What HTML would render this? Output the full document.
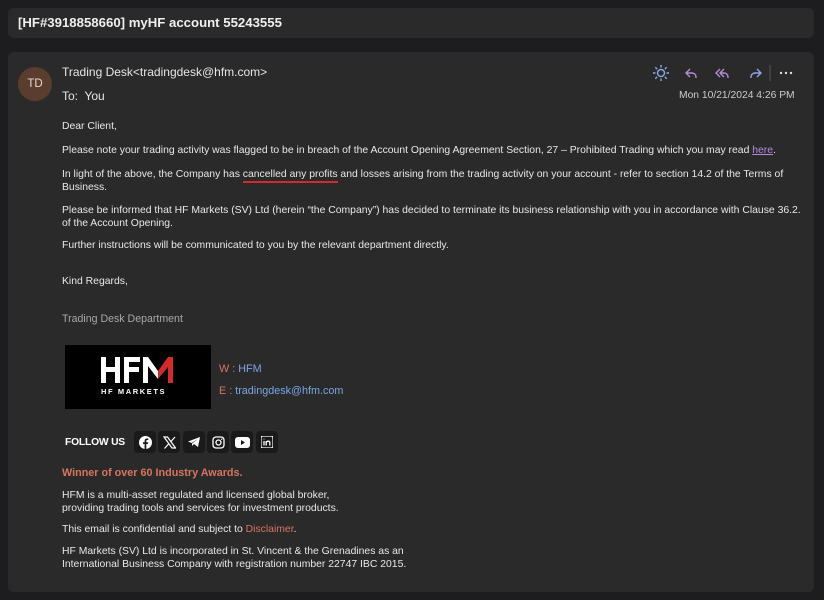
<!DOCTYPE html>
<html><head><meta charset="utf-8"><style>
*{margin:0;padding:0;box-sizing:border-box}
body{width:824px;height:600px;background:#1d1d20;font-family:"Liberation Sans",Arial,sans-serif;color:#e6e6e6;position:relative;overflow:hidden}
.subj{position:absolute;left:8px;top:8px;width:806px;height:30px;background:#2a2a2a;border-radius:6px;font-size:13.2px;font-weight:bold;color:#f0f0f0;padding:7px 10px}
.card{position:absolute;left:8px;top:52px;width:806px;height:540px;background:#2a2a2a;border-radius:6px}
.a{position:absolute;white-space:nowrap}
.t{font-size:10.4px;color:#e8e8e8;line-height:12.5px}
.av{left:18px;top:67px;width:34px;height:34px;border-radius:50%;background:#5a3d2e;color:#e8d6cc;font-size:11.5px;text-align:center;line-height:34px}
.s{font-size:12px;color:#e6e6e6}
.ic{width:22px;height:22px;background:#1a1a1a;border-radius:4px;display:flex;align-items:center;justify-content:center;position:absolute;top:431px}
.u{border-bottom:2px solid #d42a2a;padding-bottom:1px}
</style></head><body>
<div class="subj">[HF#3918858660] myHF account 55243555</div>
<div class="card"></div>
<div class="a av">TD</div>
<div class="a s" style="left:62px;top:65px">Trading Desk&lt;tradingdesk@hfm.com&gt;</div>
<div class="a s" style="left:62px;top:89px">To:&nbsp; You</div>
<svg class="a" style="left:650px;top:62px" width="150" height="22" viewBox="0 0 150 22">
<g stroke="#8aa7e8" stroke-width="1.4" fill="none"><circle cx="11" cy="11" r="3.5"/><path d="M11 3v2.5M11 16.5V19M3 11h2.5M16.5 11H19M5.3 5.3l1.8 1.8M14.9 14.9l1.8 1.8M5.3 16.7l1.8-1.8M14.9 7.1l1.8-1.8"/></g>
<path d="M40 7l-4 4 4 4M36 11h6a4 4 0 0 1 4 4v1" stroke="#b78ad8" stroke-width="1.4" fill="none"/>
<path d="M70 7l-4 4 4 4M74 7l-4 4 4 4M70 11h4a4 4 0 0 1 4 4v1" stroke="#b78ad8" stroke-width="1.4" fill="none"/>
<path d="M107 7l4 4-4 4M111 11h-6a4 4 0 0 0-4 4v1" stroke="#8aa7e8" stroke-width="1.4" fill="none"/>
<path d="M120 3v16" stroke="#555" stroke-width="1"/>
<circle cx="131" cy="11" r="1.2" fill="#ddd"/><circle cx="136" cy="11" r="1.2" fill="#ddd"/><circle cx="141" cy="11" r="1.2" fill="#ddd"/>
</svg>
<div class="a" style="left:679px;top:90px;font-size:10.3px;color:#ccc">Mon 10/21/2024 4:26 PM</div>
<div class="a t" style="left:62px;top:121px">Dear Client,</div>
<div class="a t" style="left:62px;top:145px">Please note your trading activity was flagged to be in breach of the Account Opening Agreement Section, 27 – Prohibited Trading which you may read <span style="color:#b58ae0;text-decoration:underline">here</span>.</div>
<div class="a t" style="left:62px;top:169px">In light of the above, the Company has <span class="u">cancelled any profits</span> and losses arising from the trading activity on your account - refer to section 14.2 of the Terms of<br>Business.</div>
<div class="a t" style="left:62px;top:205px">Please be informed that HF Markets (SV) Ltd (herein “the Company”) has decided to terminate its business relationship with you in accordance with Clause 36.2.<br>of the Account Opening.</div>
<div class="a t" style="left:62px;top:240px">Further instructions will be communicated to you by the relevant department directly.</div>
<div class="a t" style="left:62px;top:276px">Kind Regards,</div>
<div class="a" style="left:62px;top:313px;font-size:10.6px;color:#a8a8a8">Trading Desk Department</div>
<div class="a" style="left:65px;top:345px;width:146px;height:64px;background:#000"></div>
<svg class="a" style="left:98px;top:355px" width="82" height="30" viewBox="0 0 82 30">
<path d="M3 2h5v10h9V2h5v26h-5V17H8v11H3z" fill="#fff"/>
<path d="M26 2h16v5H31v5h10v5H31v11h-5z" fill="#fff"/>
<path d="M45 28V2h5l10 14v8L50 11v17z" fill="#fff"/>
<path d="M60 16l10-14h5v26h-5V12l-10 12z" fill="#d42a2a"/>
</svg>
<div class="a" style="left:101px;top:387px;font-size:7.5px;font-weight:bold;color:#fff;letter-spacing:1.6px">HF MARKETS</div>
<div class="a" style="left:219px;top:363px;font-size:10.8px;color:#d9745f">W : <span style="color:#7aa6e6">HFM</span></div>
<div class="a" style="left:219px;top:385px;font-size:10.8px;color:#d9745f">E : <span style="color:#7aa6e6">tradingdesk@hfm.com</span></div>
<div class="a" style="left:65px;top:437px;font-size:10.3px;font-weight:bold;color:#fff;letter-spacing:-.2px">FOLLOW US</div>
<div class="ic" style="left:134px"><svg width="13" height="13"><circle cx="6.5" cy="6.5" r="6.5" fill="#fff"/><path d="M7.3 13V8h1.6l.3-1.8H7.3V5c0-.6.3-1 1-1h1V2.5H8C6.4 2.5 5.6 3.4 5.6 5v1.2H4V8h1.6v5z" fill="#1a1a1a"/></svg></div>
<div class="ic" style="left:158px"><svg width="13" height="13"><path d="M1 1h3.5l8 11H9z" fill="none" stroke="#fff" stroke-width="1.2"/><path d="M12 1L7.5 6M1.5 12.5L6 7.5" stroke="#fff" stroke-width="1.2"/></svg></div>
<div class="ic" style="left:183px"><svg width="14" height="12"><path d="M1 5.5L13 1l-2 10-4-3-2 2V7.5L11 3 4.5 7z" fill="#fff"/></svg></div>
<div class="ic" style="left:207px"><svg width="13" height="13"><rect x="1" y="1" width="11" height="11" rx="3" fill="none" stroke="#fff" stroke-width="1.3"/><circle cx="6.5" cy="6.5" r="2.5" fill="none" stroke="#fff" stroke-width="1.3"/><circle cx="9.7" cy="3.3" r=".7" fill="#fff"/></svg></div>
<div class="ic" style="left:231px"><svg width="15" height="11"><rect width="15" height="11" rx="3" fill="#fff"/><path d="M6 3v5l4-2.5z" fill="#1a1a1a"/></svg></div>
<div class="ic" style="left:256px"><svg width="12" height="12"><rect width="12" height="12" rx="2" fill="none" stroke="#fff" stroke-width="1.2"/><path d="M3 5v4.5M3 2.8v.6M5.2 9.5V5M5.2 6.5c.5-1.5 3.6-2 3.6 0v3" stroke="#fff" stroke-width="1.3" fill="none"/></svg></div>
<div class="a" style="left:62px;top:467px;font-size:10.8px;font-weight:bold;color:#d9745f">Winner of over 60 Industry Awards.</div>
<div class="a t" style="left:62px;top:490px">HFM is a multi-asset regulated and licensed global broker,<br>providing trading tools and services for investment products.</div>
<div class="a t" style="left:62px;top:524px">This email is confidential and subject to <span style="color:#d9745f">Disclaimer</span>.</div>
<div class="a t" style="left:62px;top:546px">HF Markets (SV) Ltd is incorporated in St. Vincent &amp; the Grenadines as an<br>International Business Company with registration number 22747 IBC 2015.</div>
</body></html>
